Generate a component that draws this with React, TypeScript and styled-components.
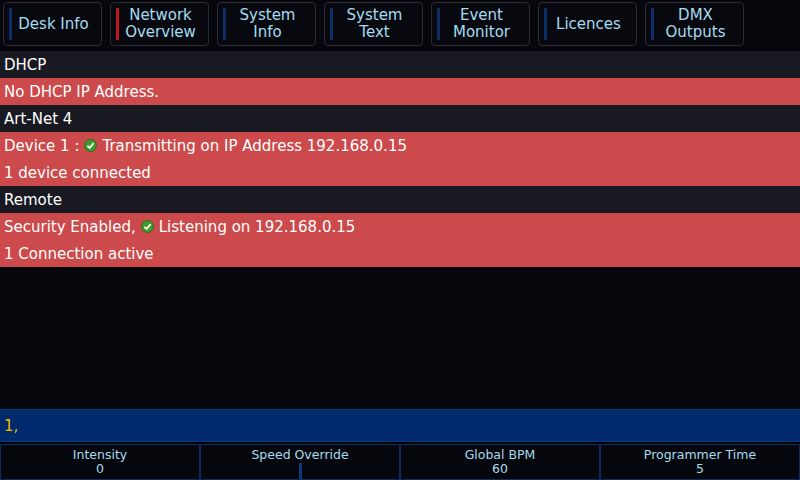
import React from "react";
import styled, { createGlobalStyle } from "styled-components";

const G = createGlobalStyle`
  html,body{margin:0;padding:0;background:#06070d;}
  body{font-family:"DejaVu Sans",sans-serif;}
`;
const Page = styled.div`width:800px;height:480px;display:flex;flex-direction:column;background:#06070d;overflow:hidden;`;
const Tabs = styled.div`display:flex;gap:8px;padding:2px 3px 0 3px;height:48px;box-sizing:border-box;`;
const Tab = styled.div<{ $active?: boolean }>`
  width:99px;height:44px;box-sizing:border-box;border:1px solid #2b2d33;border-radius:4px;background:#08090f;
  display:flex;align-items:center;position:relative;color:#a6dcef;font-size:15px;line-height:17px;text-align:center;
  &::before{content:"";width:3px;height:32px;margin-left:5px;background:${p => p.$active ? "#c0161c" : "#0c2d66"};flex:none;}
  span{flex:1;padding-right:6px;}
`;
const Section = styled.div`height:27px;background:#181921;color:#fff;font-size:15px;display:flex;align-items:center;padding-left:4px;`;
const Alert = styled.div`height:27px;background:#cc4a4b;color:#fff;font-size:15px;display:flex;align-items:center;padding-left:4px;gap:5px;`;
const Content = styled.div`margin-top:3px;display:flex;flex-direction:column;flex:1;`;
const Cmd = styled.div`height:31px;background:#002a6c;border-top:1px solid #0b3a7f;border-bottom:1px solid #0b3a7f;color:#f0b800;font-size:15px;display:flex;align-items:center;padding-left:4px;`;
const Bar = styled.div`display:grid;grid-template-columns:repeat(4,1fr);margin-top:2px;height:36px;`;
const Cell = styled.div`border:1px solid #0b2d62;color:#a6dcef;font-size:12.5px;display:flex;flex-direction:column;align-items:center;line-height:14px;padding-top:3px;box-sizing:border-box;`;
const Slider = styled.div`width:3px;height:16px;background:#0c3a80;margin-top:1px;`;

const Check = () => (
  <svg width="13" height="13" viewBox="0 0 13 13">
    <circle cx="6.5" cy="6.5" r="6" fill="#3f9a2a" stroke="#2b6e1c" />
    <path d="M3.4 6.8 L5.6 9 L9.6 4.2" stroke="#fff" strokeWidth="1.8" fill="none" />
  </svg>
);

export default function App() {
  const tabs: [string, boolean?][] = [["Desk Info"], ["Network\nOverview", true], ["System\nInfo"], ["System\nText"], ["Event\nMonitor"], ["Licences"], ["DMX\nOutputs"]];
  return (
    <Page>
      <G />
      <Tabs>
        {tabs.map(([t, a]) => (
          <Tab key={t} $active={a}><span>{t.split("\n").map((l, i) => <div key={i}>{l}</div>)}</span></Tab>
        ))}
      </Tabs>
      <Content>
        <Section>DHCP</Section>
        <Alert>No DHCP IP Address.</Alert>
        <Section>Art-Net 4</Section>
        <Alert>Device 1 : <Check /> Transmitting on IP Address 192.168.0.15</Alert>
        <Alert>1 device connected</Alert>
        <Section>Remote</Section>
        <Alert>Security Enabled, <Check /> Listening on 192.168.0.15</Alert>
        <Alert>1 Connection active</Alert>
      </Content>
      <Cmd>1,</Cmd>
      <Bar>
        <Cell>Intensity<div>0</div></Cell>
        <Cell>Speed Override<Slider /></Cell>
        <Cell>Global BPM<div>60</div></Cell>
        <Cell>Programmer Time<div>5</div></Cell>
      </Bar>
    </Page>
  );
}
